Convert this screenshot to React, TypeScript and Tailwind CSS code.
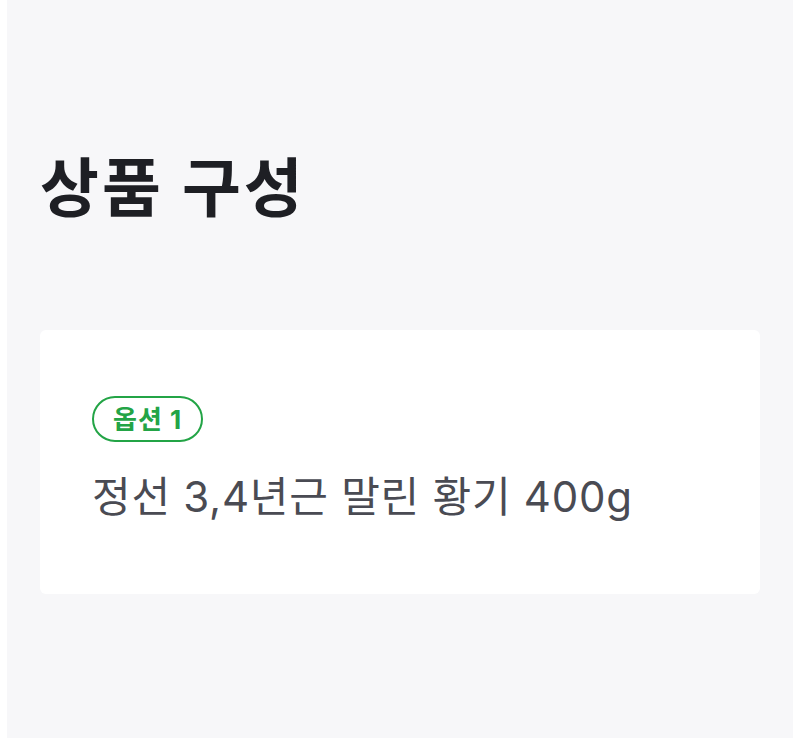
import React from 'react';

export default function App() {
  return (
    <div className="min-h-[738px] bg-white px-[7px]" style={{ fontFamily: 'Inter, "Noto Sans CJK KR", sans-serif' }}>
      <div className="min-h-[738px] bg-[#f7f7f9] px-[33px] pt-[143px]">
        <h1 className="text-[64px] font-bold leading-[90px] text-[#1e1f24] tracking-[3px]">상품 구성</h1>
        <div className="mt-[97px] rounded-[6px] bg-white px-[52px] pt-[66px] pb-[66px]">
          <span className="inline-flex h-[46px] items-center rounded-full border-2 border-[#23a446] px-[19px] text-[26px] font-bold text-[#23a446] tracking-[1px]">
            옵션 1
          </span>
          <p className="mt-[24px] text-[42px] leading-[62px] text-[#4a4b53] tracking-[0.75px]">정선 3,4년근 말린 황기 400g</p>
        </div>
      </div>
    </div>
  );
}
